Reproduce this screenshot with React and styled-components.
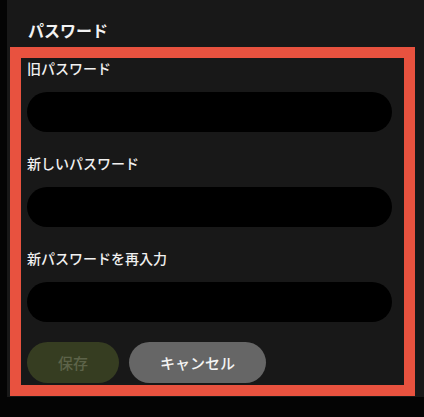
import React from 'react';
import styled, { createGlobalStyle } from 'styled-components';

const GlobalStyle = createGlobalStyle`
  html, body {
    margin: 0;
    padding: 0;
    background: #040404;
    font-family: "Noto Sans CJK JP", "Noto Sans", sans-serif;
  }
`;

const Panel = styled.section`
  margin-left: 7px;
  width: 417px;
  box-sizing: border-box;
  background: #181818;
  padding: 18px 9px 1px 3px;
`;

const Heading = styled.h2`
  margin: 0 0 5px 18px;
  font-size: 16px;
  line-height: 24px;
  font-weight: 700;
  color: #f2f2f2;
`;

const Form = styled.form`
  border: 11px solid #e8523f;
  padding: 0 12px 2px 6px;
  display: flex;
  flex-direction: column;
  gap: 21px;
`;

const Field = styled.label`
  display: flex;
  flex-direction: column;
  gap: 14px;
`;

const LabelText = styled.span`
  font-size: 14px;
  line-height: 20px;
  font-weight: 500;
  color: #f0f0f0;
`;

const Input = styled.input`
  height: 40px;
  box-sizing: border-box;
  border: none;
  border-radius: 20px;
  background: #000;
  color: #fff;
  padding: 0 16px;
  outline: none;
`;

const Actions = styled.div`
  display: flex;
  gap: 10px;
  margin-top: -1px;
`;

const Button = styled.button`
  height: 41px;
  padding: 0 31px;
  border: none;
  border-radius: 21px;
  font-family: inherit;
  font-size: 15px;
  font-weight: 500;
  background: ${({ $primary }) => ($primary ? '#363d21' : '#666666')};
  color: ${({ $primary }) => ($primary ? '#5d6349' : '#f4f4f4')};
  cursor: ${({ disabled }) => (disabled ? 'default' : 'pointer')};
`;

const fields = ['旧パスワード', '新しいパスワード', '新パスワードを再入力'];

export default function App() {
  return (
    <>
      <GlobalStyle />
      <Panel>
        <Heading>パスワード</Heading>
        <Form onSubmit={(e) => e.preventDefault()}>
          {fields.map((f) => (
            <Field key={f}>
              <LabelText>{f}</LabelText>
              <Input type="password" />
            </Field>
          ))}
          <Actions>
            <Button $primary disabled>
              保存
            </Button>
            <Button type="button">キャンセル</Button>
          </Actions>
        </Form>
      </Panel>
    </>
  );
}
